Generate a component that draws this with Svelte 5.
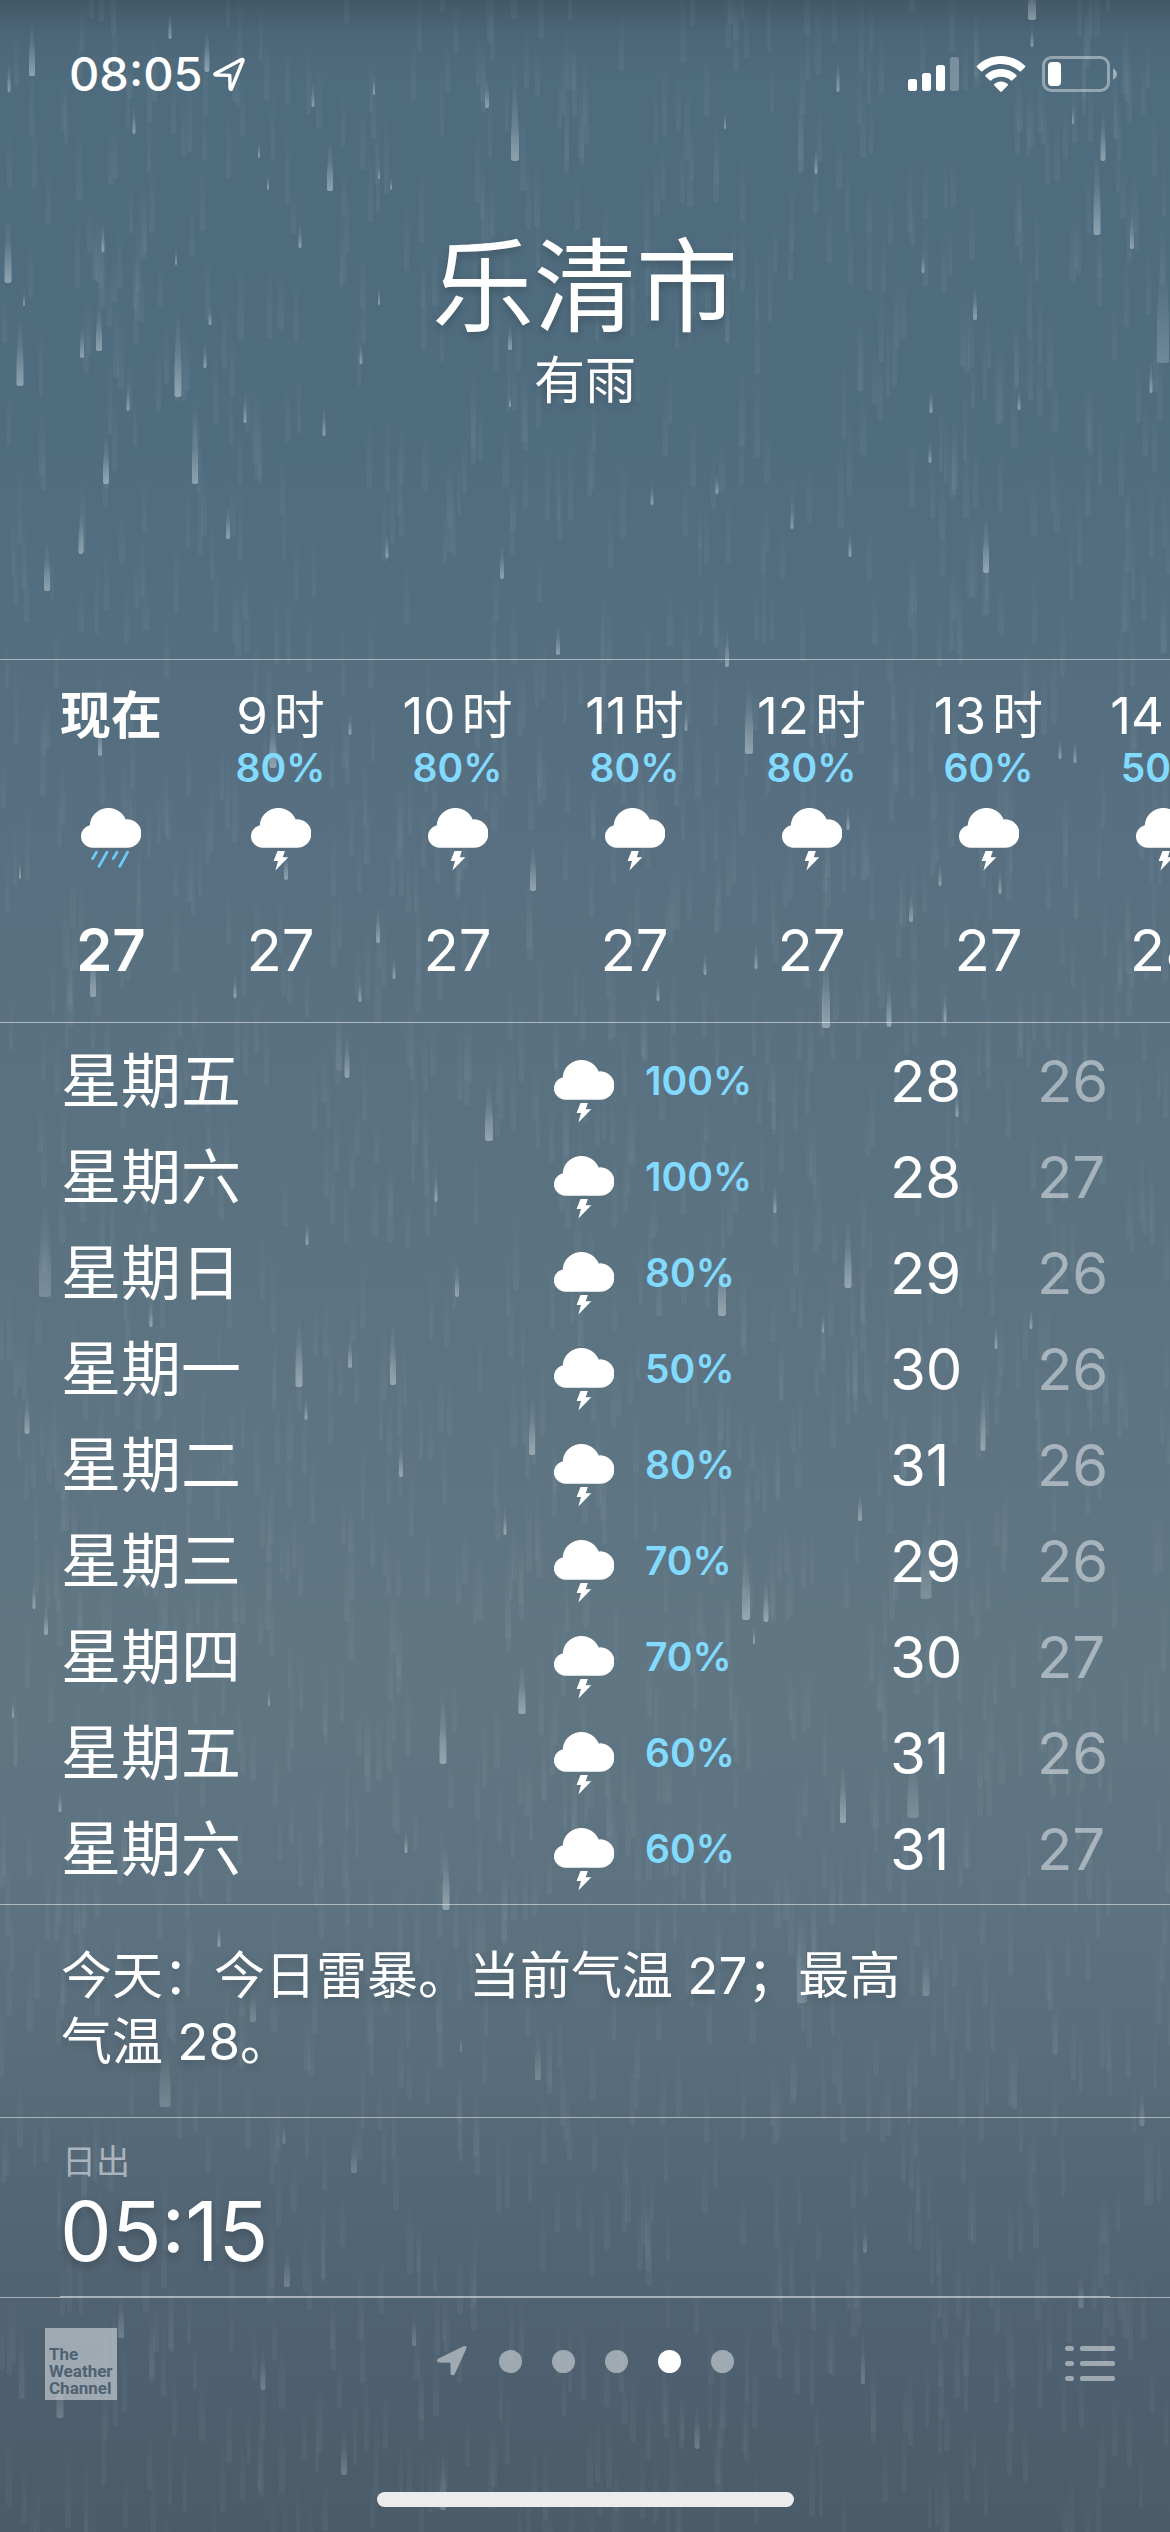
<script>
	const hours = [
		{ num: "9", rain: "80%", temp: 27 },
		{ num: "10", rain: "80%", temp: 27 },
		{ num: "11", rain: "80%", temp: 27 },
		{ num: "12", rain: "80%", temp: 27 },
		{ num: "13", rain: "60%", temp: 27 },
		{ num: "14", rain: "50%", temp: 28 },
	];

	const days = [
		{ name: "星期五", rain: "100%", high: 28, low: 26 },
		{ name: "星期六", rain: "100%", high: 28, low: 27 },
		{ name: "星期日", rain: "80%", high: 29, low: 26 },
		{ name: "星期一", rain: "50%", high: 30, low: 26 },
		{ name: "星期二", rain: "80%", high: 31, low: 26 },
		{ name: "星期三", rain: "70%", high: 29, low: 26 },
		{ name: "星期四", rain: "70%", high: 30, low: 27 },
		{ name: "星期五", rain: "60%", high: 31, low: 26 },
		{ name: "星期六", rain: "60%", high: 31, low: 27 },
	];

	const cities = ["1", "2", "3", "4", "5"];
	const current = 3;

	// near drops: x, bottom, width, length
	const drops = [
		[32, 76, 6, 55], [170, 39, 3, 28], [207, 72, 5, 45], [9, 92, 3, 30], [134, 134, 3, 28],
		[313, 107, 3, 26], [374, 95, 2, 22], [487, 108, 4, 30], [515, 161, 8, 75], [330, 191, 6, 50],
		[259, 158, 2, 18], [8, 283, 7, 65], [103, 252, 3, 28], [300, 248, 3, 24], [24, 306, 2, 16],
		[99, 351, 6, 48], [82, 358, 4, 35], [20, 386, 7, 68], [178, 397, 7, 85], [205, 368, 3, 26],
		[128, 411, 3, 30], [361, 364, 3, 22], [379, 305, 2, 20], [510, 350, 4, 26], [379, 179, 2, 14],
		[391, 190, 2, 14], [268, 190, 2, 18], [176, 265, 2, 18], [210, 325, 3, 20], [510, 407, 2, 14],
		[1032, 20, 8, 40], [1032, 47, 3, 22], [838, 92, 3, 34], [725, 129, 2, 18], [816, 174, 3, 28],
		[1073, 124, 2, 20], [1103, 161, 5, 50], [1097, 235, 7, 80], [1132, 249, 4, 36], [975, 320, 4, 34],
		[1163, 363, 12, 120], [1151, 393, 3, 34], [931, 413, 3, 24], [923, 273, 3, 22], [1019, 410, 3, 22],
		[195, 484, 6, 75], [106, 484, 6, 50], [81, 554, 5, 45], [47, 591, 6, 50], [228, 539, 4, 35],
		[986, 573, 6, 60], [502, 579, 4, 35], [387, 558, 3, 24], [652, 505, 3, 22], [717, 494, 3, 22],
		[792, 529, 3, 28], [850, 557, 3, 28], [245, 423, 3, 30], [324, 436, 3, 30], [930, 463, 3, 22],
		[558, 655, 4, 30], [727, 667, 4, 40], [749, 754, 8, 75], [826, 1028, 8, 80], [889, 1027, 5, 50],
		[911, 922, 4, 28], [940, 886, 3, 24], [1000, 894, 3, 26], [945, 1022, 3, 30], [658, 1001, 3, 24],
		[705, 975, 3, 22], [756, 969, 3, 26], [848, 830, 3, 24], [686, 731, 3, 24], [1060, 759, 3, 22],
		[1075, 763, 3, 24], [100, 756, 4, 40], [93, 997, 6, 50], [273, 768, 7, 50], [286, 880, 4, 30],
		[533, 891, 6, 50], [378, 943, 4, 36], [394, 979, 3, 24], [360, 1002, 3, 24], [20, 879, 2, 22],
		[235, 998, 3, 24], [350, 735, 3, 22], [347, 1078, 5, 45], [489, 1141, 8, 60], [436, 1202, 3, 30],
		[775, 1213, 3, 28], [45, 1297, 12, 95], [307, 1245, 3, 24], [457, 1297, 4, 35], [848, 1288, 7, 70],
		[722, 1316, 8, 70], [299, 1387, 7, 70], [393, 1385, 6, 60], [350, 1368, 4, 34], [27, 1434, 5, 40],
		[151, 1327, 3, 26], [532, 1455, 6, 60], [306, 1420, 3, 24], [401, 1477, 4, 34], [983, 1451, 5, 70],
		[996, 1349, 3, 26], [823, 1333, 2, 18], [1031, 1329, 3, 22], [957, 1117, 3, 28], [505, 1535, 3, 30],
		[860, 1521, 4, 30], [34, 1609, 3, 30], [46, 1635, 4, 32], [746, 1620, 8, 70], [766, 1622, 5, 45],
		[522, 1714, 7, 50], [443, 1764, 7, 65], [843, 1823, 6, 60], [913, 1818, 11, 70], [926, 1599, 11, 90],
		[446, 1910, 7, 65], [406, 1853, 3, 24], [13, 1718, 2, 20], [269, 1706, 2, 18], [60, 1812, 3, 22],
		[754, 1644, 2, 20], [219, 1947, 3, 24], [253, 2022, 6, 35], [538, 2080, 6, 50], [165, 2107, 11, 70],
		[926, 1996, 7, 50], [802, 2003, 10, 90], [1142, 2126, 5, 40], [284, 2144, 3, 24], [354, 2173, 6, 35],
		[287, 2287, 6, 40], [865, 2253, 4, 30], [461, 2052, 2, 20], [121, 2338, 6, 45], [60, 2418, 7, 50],
		[263, 2390, 5, 45], [414, 2346, 4, 35], [344, 2475, 6, 50], [443, 2510, 6, 60], [863, 2384, 4, 50],
		[697, 2449, 5, 45], [1081, 2308, 5, 35],
	];

	// small generator so that the far rain is the same on every load
	let seed = 7;
	function random() {
		seed = (seed * 16807) % 2147483647;
		return seed / 2147483647;
	}

	const farDrops = Array.from({ length: 2000 }, () => ({
		x: Math.round(random() * 1170),
		y: Math.round(random() * 2560) - 40,
		w: 4 + Math.round(random() * 2),
		h: 45 + Math.round(random() * 40),
	}));
</script>

{#snippet cloud(kind)}
	<svg class="weather" viewBox="0 0 60 66" aria-hidden="true">
		<path
			fill="#fff"
			d="M11.5 39.7A11.5 11.5 0 0 1 0 28.2C0 22.6 4 18.4 8.7 17.4A18.7 18.7 0 0 1 44.6 11.4A14.2 14.2 0 1 1 46 39.7Z"
		/>
		{#if kind === "rain"}
			<path
				fill="none"
				stroke="#6bcbf8"
				stroke-width="2.8"
				stroke-linecap="round"
				d="M15.4 44.2L11.6 50.6M26 44.2L18 58.4M36 44.2L32.2 50.6M46.6 44.2L38.8 58.4"
			/>
		{:else}
			<path fill="#fff" d="M26.5 43H33.8L31.8 49.2H37.3L24.4 62.4L27 52.9H22.6Z" />
		{/if}
	</svg>
{/snippet}

<main>
	<svg class="rain" viewBox="0 0 1170 2532" preserveAspectRatio="xMidYMin slice" aria-hidden="true">
		<defs>
			<linearGradient id="near" x1="0" y1="0" x2="0" y2="1">
				<stop offset="0" stop-color="#fff" stop-opacity="0" />
				<stop offset="0.4" stop-color="#e4edf2" stop-opacity="0.1" />
				<stop offset="1" stop-color="#e4edf2" stop-opacity="0.44" />
			</linearGradient>
			<linearGradient id="far" x1="0" y1="0" x2="0" y2="1">
				<stop offset="0" stop-color="#fff" stop-opacity="0" />
				<stop offset="1" stop-color="#d8e8ee" stop-opacity="0.05" />
			</linearGradient>
		</defs>
		{#each farDrops as d}
			<rect x={d.x} y={d.y} width={d.w} height={d.h} rx="2" fill="url(#far)" />
		{/each}
		{#each drops as [x, bottom, w, h]}
			<path
				fill="url(#near)"
				opacity={bottom > 1950 || w > 10 ? 0.5 : 0.95}
				d="M{x - w / 5} {bottom - h}H{x + w / 5}L{x + w / 2} {bottom - h / 3}V{bottom - 2}Q{x + w / 2} {bottom} {x} {bottom}Q{x - w / 2} {bottom} {x - w / 2} {bottom - 2}V{bottom - h / 3}Z"
			/>
		{/each}
	</svg>

	<div class="status">
		<span class="clock">08:05</span>
		<svg class="locating" width="32" height="34" viewBox="0 0 32 34">
			<path
				d="M2.5 16.5L28.5 2.6C29.6 2 30.3 2.7 29.9 3.8L18.6 31.6C18.1 32.8 17.2 32.6 17.1 31.4L16.8 18.4L3 18C1.6 17.9 1.4 17.1 2.5 16.5Z"
				fill="none"
				stroke="#fff"
				stroke-width="3.4"
				stroke-linejoin="round"
			/>
		</svg>
		<svg class="signal" width="52" height="36" viewBox="0 0 52 36" fill="#fff">
			<rect x="0" y="23" width="9" height="12" rx="2.5" />
			<rect x="14" y="17" width="9" height="18" rx="2.5" />
			<rect x="28" y="9" width="9" height="26" rx="2.5" />
			<rect x="42" y="1" width="9" height="34" rx="2.5" opacity="0.25" />
		</svg>
		<svg class="wifi" width="50" height="36" viewBox="0 0 50 36" fill="#fff">
			<path d="M25 0C34.5 0 43 3.8 49 9.8C49.5 10.3 49.5 10.8 49 11.3L45 15.2C44.5 15.7 44 15.7 43.5 15.2C38.5 10.6 32 8 25 8C18 8 11.5 10.6 6.5 15.2C6 15.7 5.5 15.7 5 15.2L1 11.3C0.5 10.8 0.5 10.3 1 9.8C7 3.8 15.5 0 25 0Z" />
			<path d="M25 12.9C31 12.9 36.4 15.2 40.4 18.9C40.9 19.4 40.9 19.9 40.4 20.4L36.4 24.3C35.9 24.8 35.4 24.8 34.9 24.4C32.2 22.1 28.8 20.8 25 20.8C21.2 20.8 17.8 22.1 15.1 24.4C14.6 24.8 14.1 24.8 13.6 24.3L9.6 20.4C9.1 19.9 9.1 19.4 9.6 18.9C13.6 15.2 19 12.9 25 12.9Z" />
			<path d="M25 25.6C27.5 25.6 29.9 26.5 31.6 28C32.2 28.5 32.2 29 31.7 29.5L25.8 35.4C25.3 35.9 24.7 35.9 24.2 35.4L18.3 29.5C17.8 29 17.8 28.5 18.4 28C20.1 26.5 22.5 25.6 25 25.6Z" />
		</svg>
		<svg class="battery" width="76" height="36" viewBox="0 0 76 36">
			<rect x="1.5" y="1.5" width="65" height="33" rx="8" fill="none" stroke="#fff" stroke-opacity="0.4" stroke-width="3" />
			<rect x="6" y="6" width="13" height="24" rx="4" fill="#fff" />
			<path d="M71 12.5C73.4 13.5 75 15.6 75 18C75 20.4 73.4 22.5 71 23.5Z" fill="#fff" opacity="0.45" />
		</svg>
	</div>

	<header>
		<h1>乐清市</h1>
		<p>有雨</p>
	</header>

	<ul class="hourly">
		<li class="now">
			<span class="time">现在</span>
			<span class="chance"></span>
			{@render cloud("rain")}
			<span class="temp">27</span>
		</li>
		{#each hours as hour}
			<li>
				<span class="time"><span>{hour.num}</span><span>时</span></span>
				<span class="chance">{hour.rain}</span>
				{@render cloud("storm")}
				<span class="temp">{hour.temp}</span>
			</li>
		{/each}
	</ul>

	<section class="daily">
		<table>
			<tbody>
				{#each days as day}
					<tr>
						<th scope="row">{day.name}</th>
						<td class="icon">{@render cloud("storm")}</td>
						<td class="chance">{day.rain}</td>
						<td class="high">{day.high}</td>
						<td class="low">{day.low}</td>
					</tr>
				{/each}
			</tbody>
		</table>
	</section>

	<p class="summary">今天：今日雷暴。当前气温 27；最高气温 28。</p>

	<section class="sun">
		<div class="sunrise">
			<h2>日出</h2>
			<p>05:15</p>
		</div>
	</section>

	<footer>
		<a class="channel" href="#weather-channel">The<br />Weather<br />Channel</a>
		<nav>
			<button class="here" aria-label="当前位置">
				<svg width="30" height="30" viewBox="0 0 30 30">
					<path d="M1.5 12.5L26.5 0.3C28.5 -0.5 30 0.8 29.2 2.9L17.8 28C16.9 30 13.6 29.7 13.5 27.3V16.7L2.2 16.5C-0.3 16.3 -0.6 13.5 1.5 12.5Z" fill="currentColor" />
				</svg>
			</button>
			{#each cities as city, i}
				<button class="dot" class:active={i === current} aria-label="城市 {city}"></button>
			{/each}
		</nav>
		<button class="list" aria-label="城市列表">
			<svg width="50" height="36" viewBox="0 0 50 36" fill="currentColor">
				{#each [0, 15, 30] as y}
					<rect x="0" {y} width="9" height="5" rx="2.5" />
					<rect x="15" {y} width="35" height="5" rx="2" />
				{/each}
			</svg>
		</button>
	</footer>
	<div class="home"></div>
</main>

<style>
	:global(body) {
		margin: 0;
		background: #4a5b69;
	}

	main {
		position: relative;
		min-height: 100vh;
		overflow: hidden;
		color: #fff;
		font-family: Inter, "Noto Sans CJK SC", sans-serif;
		background: linear-gradient(
			#425867 0,
			#4b6677 32px,
			#4f6c7e 80px,
			#506d7f 18%,
			#576f80 32%,
			#5b7281 48%,
			#607683 66%,
			#5d7280 76%,
			#546776 86%,
			#4e606f 94%,
			#4a5b69 100%
		);
	}

	h1,
	h2,
	p,
	ul {
		margin: 0;
		padding: 0;
		font-weight: 400;
	}

	button {
		padding: 0;
		border: 0;
		background: none;
		color: rgba(255, 255, 255, 0.46);
	}

	button svg {
		display: block;
	}

	/* the rain lies behind everything else */
	.rain {
		position: absolute;
		inset: 0;
		width: 100%;
		height: 100%;
	}

	.status,
	header,
	.hourly,
	.daily,
	.summary,
	.sun,
	footer,
	.home {
		position: relative;
	}

	.status {
		display: flex;
		align-items: center;
		height: 48px;
		padding: 50px 52px 0 69px;
	}

	.clock {
		font-size: 47px;
		font-weight: 500;
		line-height: 48px;
	}

	.locating {
		margin-left: 10px;
	}

	.signal {
		margin-left: auto;
	}

	.wifi {
		margin: 0 16px;
	}

	header {
		padding: 129px 0 244px;
		text-align: center;
		text-shadow: 0 4px 10px rgba(0, 0, 0, 0.2);
	}

	h1 {
		font-size: 102px;
		line-height: 120px;
	}

	header p {
		font-size: 51px;
		line-height: 68px;
	}

	.hourly {
		display: flex;
		overflow: hidden;
		padding: 26px 0 42px 30px;
		border-top: 1px solid rgba(255, 255, 255, 0.5);
		border-bottom: 1px solid rgba(255, 255, 255, 0.5);
		list-style: none;
	}

	.hourly li {
		display: flex;
		flex: 0 0 177px;
		flex-direction: column;
		align-items: center;
	}

	.hourly .now {
		flex-basis: 162px;
		font-weight: 600;
	}

	.time {
		display: flex;
		gap: 6px;
		height: 60px;
		margin-bottom: 2px;
		font-size: 51px;
		line-height: 60px;
	}

	.chance {
		color: #82dbff;
		font-size: 39px;
		font-weight: 600;
		line-height: 40px;
	}

	.hourly .chance {
		height: 40px;
		margin-bottom: 20px;
	}

	.weather {
		display: block;
		width: 60px;
		height: 66px;
	}

	.temp {
		margin-top: 46px;
		font-size: 58px;
		line-height: 60px;
	}

	.daily {
		padding: 10px 61px 7px;
		border-bottom: 1px solid rgba(255, 255, 255, 0.5);
	}

	table {
		width: 100%;
		border-collapse: collapse;
		table-layout: fixed;
	}

	th,
	td {
		height: 96px;
		padding: 0;
		box-sizing: border-box;
		font-size: 60px;
		font-weight: 400;
		line-height: 60px;
		text-align: left;
	}

	td.icon {
		width: 91px;
		padding-top: 24px;
	}

	td.chance {
		width: 245px;
		font-size: 39px;
		font-weight: 600;
	}

	.high,
	.low {
		width: 147px;
		font-size: 58px;
	}

	.low {
		width: 72px;
		color: rgba(255, 255, 255, 0.46);
	}

	.summary {
		padding: 38px 20% 42px 61px;
		border-bottom: 1px solid rgba(255, 255, 255, 0.5);
		font-size: 51px;
		line-height: 66px;
		text-shadow: 0 4px 8px rgba(0, 0, 0, 0.15);
	}

	.sun {
		padding: 0 60px;
		border-bottom: 1px solid rgba(255, 255, 255, 0.5);
	}

	.sunrise {
		padding: 24px 0;
		border-bottom: 1px solid rgba(255, 255, 255, 0.5);
	}

	h2 {
		margin-bottom: 10px;
		padding-left: 2px;
		color: rgba(255, 255, 255, 0.5);
		font-size: 34px;
		line-height: 40px;
	}

	.sunrise p {
		font-size: 82px;
		line-height: 80px;
		text-shadow: 0 4px 8px rgba(0, 0, 0, 0.2);
	}

	footer {
		display: grid;
		grid-template-columns: 1fr auto 1fr;
		align-items: start;
		padding: 30px 0 92px;
	}

	.channel {
		width: 72px;
		height: 72px;
		margin-left: 45px;
		padding: 18px 0 0 4px;
		box-sizing: border-box;
		background: rgba(255, 255, 255, 0.46);
		color: #4f6271;
		font-family: Roboto, sans-serif;
		font-size: 17px;
		font-weight: 700;
		line-height: 17px;
		text-decoration: none;
	}

	nav {
		display: flex;
		align-items: center;
		gap: 30px;
		margin-top: 18px;
	}

	.here {
		margin-right: 2px;
	}

	.dot {
		width: 23px;
		height: 23px;
		border-radius: 50%;
		background: rgba(255, 255, 255, 0.46);
	}

	.dot.active {
		background: #fff;
	}

	.list {
		margin-top: 18px;
		margin-right: 55px;
		justify-self: end;
	}

	.home {
		width: 417px;
		height: 15px;
		margin: 0 auto 24px;
		border-radius: 8px;
		background: #ececec;
	}
</style>
